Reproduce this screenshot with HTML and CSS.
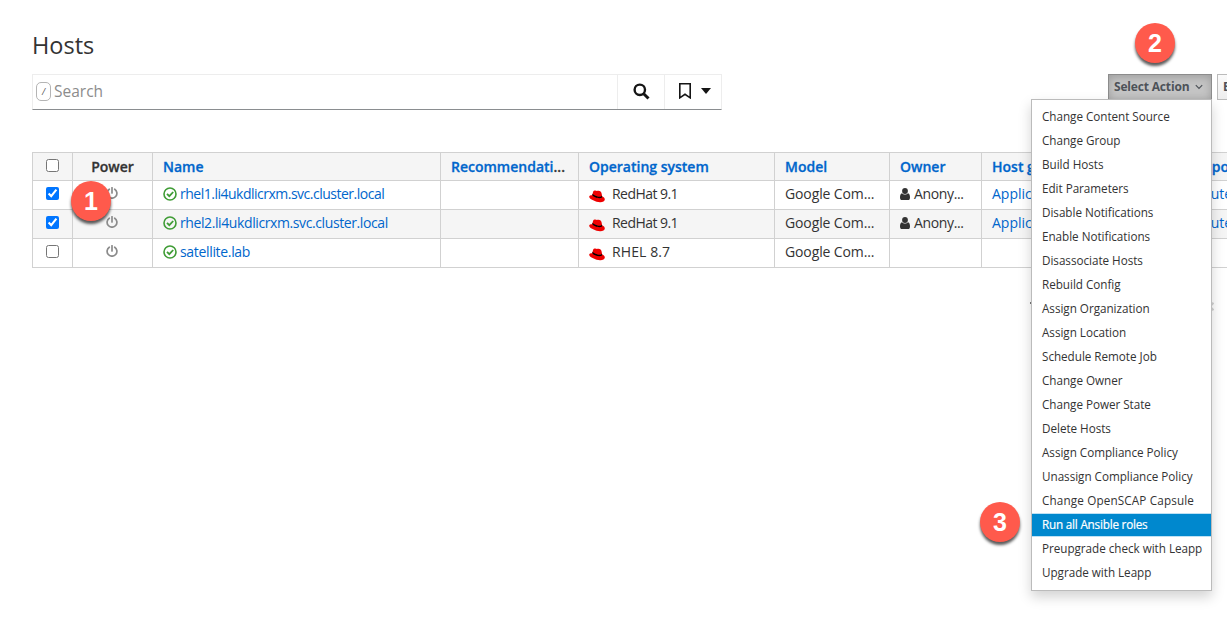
FILE: index.html
```html
<!DOCTYPE html>
<html lang="en">
<head>
<meta charset="utf-8">
<title>Hosts</title>
<link rel="stylesheet" href="styles.css">
</head>
<body>
<svg class="defs" width="0" height="0">
  <symbol id="power" viewBox="0 0 12 12"><path d="M3.300 2.200A4.900 4.900 0 1 0 8.700 2.200M6 .7V6" fill="none" stroke="#8b8b8b" stroke-width="1.700" stroke-linecap="round"/></symbol>
  <symbol id="ok" viewBox="0 0 14 14"><circle cx="7" cy="7" r="6" fill="none" stroke="#3f9c35" stroke-width="1.6"/><path d="M4 6.8l2.3 2.4L10.2 5" fill="none" stroke="#3f9c35" stroke-width="1.8"/></symbol>
  <symbol id="hat" viewBox="0 0 16 13"><path d="M4.200 1.400C4.700.3 6 .2 7 .8c.8.3 1.500 0 2.500 0 1.700.1 2.700 1 3.100 2.800l.6 2.800c1.700.6 2.800 1.800 2.600 3.200-.2 1.900-2.200 2.700-4.800 2.600C7 12 .3 9.200.2 6.700.2 5.600 1.400 5.300 3.200 5.200z" fill="#e00"/><path d="M3.300 4.800c.1 2 5.500 4 8.500 3.300 1-.2 1.500-.6 1.400-1.500l-.4-1.200c0 1-1 1.400-2.400 1.300C8 6.600 4.500 5 3.600 3.700z" fill="#000"/></symbol>
  <symbol id="user" viewBox="0 0 10 12"><circle cx="5" cy="3" r="2.900" fill="#333"/><path d="M2 5.300C.5 5.800 0 7.500 0 9.400 0 11 .7 12 2 12h6c1.300 0 2-1 2-2.600 0-1.900-.5-3.600-2-4.100C6.500 7 3.500 7 2 5.300z" fill="#333"/></symbol>
</svg>
<main class="page">
  <h1 class="title">Hosts</h1>
  <div class="toolbar">
    <div class="search">
      <div class="field"><kbd class="key">/</kbd><span class="hint">Search</span></div>
      <div class="find"><svg width="17" height="17" viewBox="0 0 17 17"><circle cx="6.800" cy="6.800" r="5.200" fill="none" stroke="#151515" stroke-width="2.400"/><path d="M10.700 10.700l4.800 4.800" stroke="#151515" stroke-width="3"/></svg></div>
      <div class="marks"><svg width="12" height="16" viewBox="0 0 12 16"><path d="M.8.8h10.400v14L6 11.300.8 14.800z" fill="none" stroke="#151515" stroke-width="1.600"/></svg><i class="caret"></i></div>
    </div>
    <div class="actions">
      <div class="btn open">Select Action<svg width="8" height="6" viewBox="0 0 8 6"><path d="M.8 1.200L4 4.400l3.200-3.200" fill="none" stroke="#4d5258" stroke-width="1.200"/></svg></div>
      <div class="btn">Export</div>
    </div>
  </div>
  <table class="hosts">
    <colgroup><col class="c1"><col class="c2"><col class="c3"><col class="c4"><col class="c5"><col class="c6"><col class="c7"><col class="c8"><col class="c9"></colgroup>
    <thead><tr><th class="mid"><input type="checkbox"></th><th class="mid">Power</th><th class="link">Name</th><th><span class="link">Recommendati</span>...</th><th class="link">Operating system</th><th class="link">Model</th><th class="link">Owner</th><th class="link">Host group</th><th class="link report">Last report</th></tr></thead>
    <tbody>
      <tr><td class="mid"><input type="checkbox" checked></td><td class="mid"><svg class="pw"><use href="#power"/></svg></td><td><svg class="ok"><use href="#ok"/></svg><span class="link n1">rhel1.li4ukdlicrxm.svc.cluster.local</span></td><td></td><td><svg class="hat"><use href="#hat"/></svg><span class="os">RedHat 9.1</span></td><td class="model">Google Com...</td><td class="owner"><svg class="user"><use href="#user"/></svg>Anony...</td><td class="link grp">Application</td><td class="link ago">6 minutes ago</td></tr>
      <tr class="alt"><td class="mid"><input type="checkbox" checked></td><td class="mid"><svg class="pw"><use href="#power"/></svg></td><td><svg class="ok"><use href="#ok"/></svg><span class="link n2">rhel2.li4ukdlicrxm.svc.cluster.local</span></td><td></td><td><svg class="hat"><use href="#hat"/></svg><span class="os">RedHat 9.1</span></td><td class="model">Google Com...</td><td class="owner"><svg class="user"><use href="#user"/></svg>Anony...</td><td class="link grp">Application</td><td class="link ago">6 minutes ago</td></tr>
      <tr><td class="mid"><input type="checkbox"></td><td class="mid"><svg class="pw"><use href="#power"/></svg></td><td><svg class="ok"><use href="#ok"/></svg><span class="link n3">satellite.lab</span></td><td></td><td><svg class="hat"><use href="#hat"/></svg><span class="rhel">RHEL 8.7</span></td><td class="model">Google Com...</td><td></td><td></td><td></td></tr>
    </tbody>
  </table>
  <div class="pager"><i class="tick"></i><svg width="5" height="9" viewBox="0 0 5 9"><path d="M4.500.8L1 4.500l3.500 3.700" fill="none" stroke="#d2d2d2" stroke-width="2"/></svg></div>
</main>
<ul class="menu">
  <li>Change Content Source</li><li>Change Group</li><li>Build Hosts</li><li>Edit Parameters</li><li>Disable Notifications</li><li>Enable Notifications</li><li>Disassociate Hosts</li><li>Rebuild Config</li><li>Assign Organization</li><li>Assign Location</li><li>Schedule Remote Job</li><li>Change Owner</li><li>Change Power State</li><li>Delete Hosts</li><li>Assign Compliance Policy</li><li>Unassign Compliance Policy</li><li class="wide">Change OpenSCAP Capsule</li><li class="active">Run all Ansible roles</li><li>Preupgrade check with Leapp</li><li>Upgrade with Leapp</li>
</ul>
<div class="badge one">1</div><div class="badge two">2</div><div class="badge three">3</div>
</body>
</html>
```
FILE: styles.css
```css
* { box-sizing: border-box; }
body { margin: 0; width: 1227px; height: 628px; overflow: hidden; position: relative; background: #fff; color: #333; font: 14px/20px "Open Sans", sans-serif; }
.defs { display: block; }
.page { padding: 31px 0 0 32px; }
.title { margin: 0; height: 43px; font-size: 23.5px; line-height: 28px; font-weight: 400; color: #333; }
.toolbar { display: flex; justify-content: space-between; height: 78px; }
.search { display: flex; width: 690px; height: 36px; border: 1px solid #ededed; border-bottom-color: #8a8d90; }
.field { width: 584px; display: flex; align-items: center; padding: 0 0 2px 3px; }
.key { width: 15px; height: 19px; border: 1px solid #b4b4b4; border-radius: 5px; font: italic 9px/17px "Open Sans", sans-serif; color: #555; text-align: center; }
.hint { margin-left: 3px; font-size: 15.500px; color: #8c8c8c; }
.find, .marks { display: flex; align-items: center; justify-content: center; border-left: 1px solid #ededed; padding-bottom: 2px; }
.find { width: 47px; }
.marks { flex: 1; gap: 10px; padding-left: 4px; }
.caret { border: 5px solid transparent; border-top: 6px solid #151515; border-bottom: 0; }
.actions { display: flex; gap: 5px; width: 119px; overflow: hidden; }
.btn { flex: none; height: 26px; border: 1px solid #bbb; padding: 0 5px; font: 700 12px/24px "Open Sans", sans-serif; color: #4d5258; background: linear-gradient(#fafafa, #ededed); white-space: nowrap; }
.btn.open { width: 104px; display: flex; align-items: center; padding: 0 8px 0 5px; justify-content: space-between; letter-spacing: -.17px; background: #c4c4c4; border-color: #8c8c8c; box-shadow: inset 0 2px 8px rgba(0,0,0,.2); }
.hosts { table-layout: fixed; width: 1250px; border-collapse: collapse; }
.c1 { width: 40px; } .c2 { width: 80px; } .c3 { width: 288px; } .c4 { width: 138px; } .c5 { width: 196px; } .c6 { width: 115px; } .c7 { width: 92px; } .c8 { width: 167px; }
th, td { height: 29px; padding: 0 10px 2px; border: 1px solid #d1d1d1; text-align: left; white-space: nowrap; overflow: hidden; vertical-align: middle; line-height: 20px; }
th { height: 28px; padding-bottom: 0; background: #f5f5f5; font-weight: 600; -webkit-text-stroke: .3px; }
.alt td { background: #f5f5f5; }
th.mid { text-align: center; padding: 0; }
td.mid { text-align: center; padding: 0 0 2px; }
td svg { vertical-align: middle; }
.link { color: #06c; }
.n1 { letter-spacing: -.5px; }
.n2 { letter-spacing: -.4px; }
.n3 { letter-spacing: -.33px; }
.os { letter-spacing: -.55px; }
.rhel { letter-spacing: .1px; }
.model { letter-spacing: -.12px; }
.owner { letter-spacing: -.35px; }
input { width: 13px; height: 13px; margin: 0 0 4px; vertical-align: middle; }
.pw { width: 12px; height: 12px; margin: -4px 1px 0 0; }
.ok { width: 14px; height: 14px; margin: -3px 3px 0 0; }
.hat { width: 16px; height: 13px; margin: 3px 7px 0 0; }
.user { width: 10px; height: 12px; margin: -3px 4px 0 0; }
th.report { padding-left: 17px; }
.ago { padding-left: 25px; }
.pager { display: flex; justify-content: space-between; width: 184px; margin: 34px 0 0 998px; }
.tick { width: 2px; height: 2px; background: #777; }
.menu { position: absolute; left: 1031px; top: 99px; width: 181px; height: 492px; margin: 0; padding: 5px 0; list-style: none; background: #fff; border: 1px solid #bbb; box-shadow: 0 6px 12px rgba(0,0,0,.175); font-size: 11.700px; letter-spacing: -.03px; }
.menu li { height: 24px; padding: 0 10px; line-height: 21px; border: solid transparent; border-width: 1px 0; white-space: nowrap; }
.menu .active { color: #fff; background: #0088ce; border-color: #bee1f4; letter-spacing: -.2px; -webkit-text-stroke: .2px; }
.menu .wide { letter-spacing: .15px; }
.badge { position: absolute; width: 40px; height: 40px; border-radius: 50%; background: #ff5a4c; color: #fff; font: 700 25px/41px "Liberation Sans", sans-serif; text-align: center; box-shadow: 0 3px 3px rgba(0,0,0,.65); }
.one { left: 71px; top: 181px; } .two { left: 1135px; top: 23px; } .three { left: 980px; top: 502px; }
```
